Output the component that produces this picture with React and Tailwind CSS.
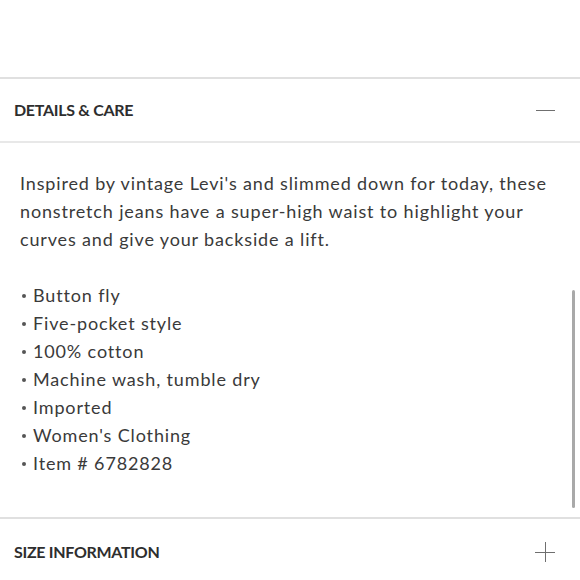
const bullets = [
    "Button fly",
    "Five-pocket style",
    "100% cotton",
    "Machine wash, tumble dry",
    "Imported",
    "Women's Clothing",
    "Item # 6782828",
];

function Minus() {
    return (
        <svg width="19" height="19" viewBox="0 0 19 19" className="block">
            <line x1="0" y1="9.5" x2="19" y2="9.5" stroke="#6f6f6f" strokeWidth="1" />
        </svg>
    );
}

function Plus() {
    return (
        <svg width="20" height="20" viewBox="0 0 20 20" className="block">
            <line x1="0" y1="10.5" x2="20" y2="10.5" stroke="#6f6f6f" strokeWidth="1" />
            <line x1="10.5" y1="0" x2="10.5" y2="20" stroke="#6f6f6f" strokeWidth="1" />
        </svg>
    );
}

export default function App() {
    return (
        <div className="relative w-[580px] h-[580px] overflow-hidden bg-white font-['Lato','Liberation_Sans',sans-serif]">
            <div className="h-[77px]" />

            {/* Details & care */}
            <div className="border-t-2 border-[#e0e0e0]">
                <div className="h-[62px] flex items-center justify-between pl-[14px] pr-[25px]">
                    <span className="text-[16px] font-bold text-[#2e2e2e] tracking-[-0.3px]">DETAILS &amp; CARE</span>
                    <Minus />
                </div>
            </div>

            <div className="border-t-2 border-[#e8e8e8] px-[20px] pt-[26px] pb-[40px] text-[18px] leading-[28px] tracking-[0.85px] text-[#3a3a3a]">
                <p>
                    Inspired by vintage Levi's and slimmed down for today, these nonstretch jeans have a super-high waist to highlight your curves and give your backside a lift.
                </p>
                <ul className="mt-[28px]">
                    {bullets.map((b) => (
                        <li key={b} className="flex items-center">
                            <span className="w-[4px] h-[4px] rounded-full bg-[#555] ml-[2px] mr-[7px] mt-[2px]" />
                            <span>{b}</span>
                        </li>
                    ))}
                </ul>
            </div>

            {/* Size information */}
            <div className="border-t-2 border-[#e0e0e0]">
                <div className="h-[66px] flex items-center justify-between pl-[14px] pr-[25px]">
                    <span className="text-[16px] font-bold text-[#2e2e2e] tracking-[-0.3px]">SIZE INFORMATION</span>
                    <Plus />
                </div>
            </div>

            {/* scrollbar */}
            <div className="absolute left-[572px] top-[290px] w-[3px] h-[218px] rounded-full bg-[#a9a9a9]" />
        </div>
    );
}
